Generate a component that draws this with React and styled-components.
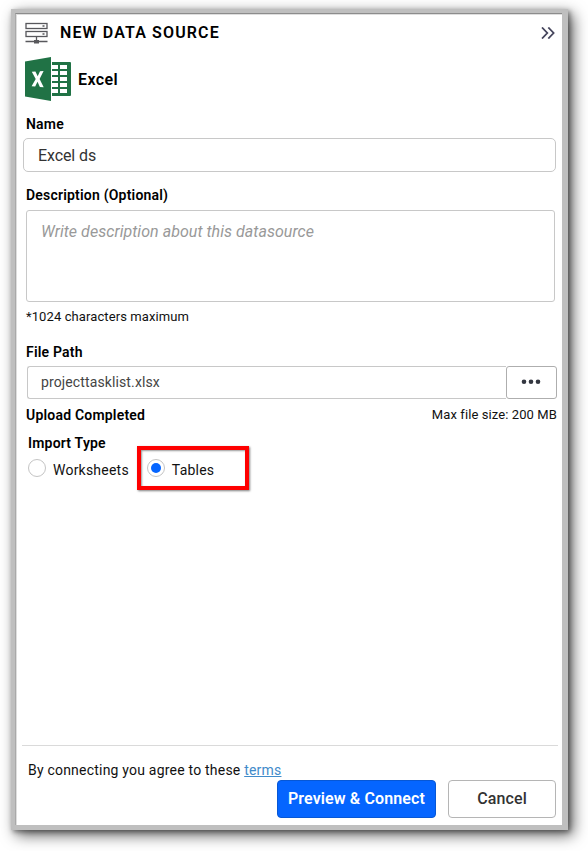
import React from "react";
import styled, { createGlobalStyle } from "styled-components";

const GlobalStyle = createGlobalStyle`
  * { box-sizing: border-box; }
  body { margin: 0; background: #fff; overflow: hidden; font-family: Roboto, "Liberation Sans", sans-serif; color: #000; }
  button, input, textarea { font-family: inherit; }
`;

const Page = styled.div`
  width: 588px;
  height: 851px;
  padding: 9px 0 0 11px;
  overflow: hidden;
`;

const Panel = styled.main`
  display: flex;
  flex-direction: column;
  width: 557px;
  height: 821px;
  border: solid #bfbfbf;
  border-width: 4px 6px 5px 4px;
  box-shadow: 5px 5px 14px rgba(0, 0, 0, 0.62), 2px 2px 5px rgba(0, 0, 0, 0.4);
  background: #fff;
`;

const Inner = styled.div`
  display: flex;
  flex-direction: column;
  flex: 1;
  border-top: 1px solid #8c8c8c;
  border-left: 1px solid #a9a9a9;
  box-shadow: inset 1px 1px 0 #dedede;
  padding: 0 4px 7px 7px;
`;

const Header = styled.header`
  display: flex;
  align-items: center;
  height: 38px;
  padding: 0 3px 0 2px;
`;

const Title = styled.h1`
  flex: 1;
  margin: 0 0 0 12px;
  font-size: 16px;
  font-weight: 600;
  line-height: 20px;
  letter-spacing: 1.12px;
`;

const Source = styled.section`
  display: flex;
  align-items: center;
  gap: 7px;
  height: 54px;
  padding-left: 2px;
`;

const SourceName = styled.h2`
  margin: 0;
  font-size: 16px;
  font-weight: 600;
  letter-spacing: 0.4px;
`;

const Label = styled.label`
  display: block;
  height: 20px;
  margin: ${(p) => p.$margin};
  font-size: 14px;
  font-weight: 600;
  line-height: 20px;
  letter-spacing: 0.2px;
`;

const NameInput = styled.input`
  width: 533px;
  height: 34px;
  margin-top: 4px;
  padding: 0 14px;
  border: 1px solid #c8c8c8;
  border-radius: 5px;
  color: #333;
  font-size: 16px;
  letter-spacing: -0.1px;
  outline: none;
`;

const Description = styled.textarea`
  display: block;
  width: 529px;
  height: 92px;
  margin: 5px 0 0 3px;
  padding: 11px 14px;
  border: 1px solid #c8c8c8;
  border-radius: 3px;
  font-size: 16px;
  letter-spacing: 0.04px;
  line-height: 20px;
  resize: none;
  outline: none;
  &::placeholder { color: #999; font-style: italic; opacity: 1; }
`;

const Hint = styled.p`
  margin: ${(p) => p.$margin || "0"};
  font-size: 13px;
  line-height: 20px;
  color: #111;
  letter-spacing: 0.1px;
`;

const FileRow = styled.div`
  display: flex;
  width: 530px;
  height: 33px;
  margin: 4px 0 0 4px;
`;

const FileInput = styled.input`
  flex: 1;
  min-width: 0;
  padding: 0 13px 2px;
  border: 1px solid #c8c8c8;
  border-right: 0;
  border-radius: 3px 0 0 3px;
  color: #444;
  font-size: 14px;
  letter-spacing: 0.12px;
  outline: none;
`;

const BrowseButton = styled.button`
  display: flex;
  align-items: center;
  justify-content: center;
  width: 51px;
  padding: 0 1px 1px 0;
  border: 1px solid #aeaeae;
  border-radius: 3px;
  background: #fff;
`;

const StatusRow = styled.div`
  display: flex;
  justify-content: space-between;
  align-items: center;
  height: 20px;
  margin: 6px 1px 0 3px;
`;

const RadioRow = styled.div`
  display: flex;
  align-items: flex-start;
  height: 46px;
  margin: -7px 0 0 5px;
`;

const Option = styled.label`
  display: flex;
  align-items: flex-start;
  height: 44px;
  gap: 7px;
  padding-top: 13px;
  ${(p) =>
    p.$marked &&
    `width: 112px; padding: 9px 0 0 6px; margin-left: 8px; border: 4px solid #fe0000; box-shadow: 1px 1px 2px rgba(0,0,0,.5), inset 1px 1px 2px rgba(0,0,0,.4);`}
`;

const Radio = styled.span`
  display: flex;
  flex: none;
  align-items: center;
  justify-content: center;
  width: 18px;
  height: 18px;
  border: 1px solid #c4c4c4;
  border-radius: 50%;
  &::after {
    content: "";
    width: 10px;
    height: 10px;
    border-radius: 50%;
    background: ${(p) => (p.$checked ? "#0565ff" : "transparent")};
  }
`;

const OptionText = styled.span`
  padding-top: 1px;
  font-size: 14px;
  line-height: 20px;
  color: #111;
  letter-spacing: 0.22px;
`;

const Footer = styled.footer`
  margin: auto 0 0 -1px;
  border-top: 1px solid #dadada;
  padding-top: 14px;
`;

const Terms = styled.p`
  margin: 0 0 0 6px;
  font-size: 14px;
  line-height: 20px;
  letter-spacing: 0.21px;
  color: #111;
`;

const Link = styled.a`
  color: #428bca;
  text-decoration: underline;
`;

const Actions = styled.div`
  display: flex;
  justify-content: flex-end;
  gap: 12px;
  padding-right: 2px;
`;

const Button = styled.button`
  width: ${(p) => (p.$primary ? "159px" : "108px")};
  height: 38px;
  padding: 0 0 1px;
  border: 1px solid ${(p) => (p.$primary ? "#0757d5" : "#b5b5b5")};
  border-radius: 4px;
  background: ${(p) => (p.$primary ? "#0565ff" : "#fff")};
  color: ${(p) => (p.$primary ? "#fff" : "#333")};
  font-size: 16px;
  font-weight: ${(p) => (p.$primary ? 600 : 500)};
  letter-spacing: 0.12px;
`;

const ServerIcon = () => (
  <svg width="23" height="22" viewBox="0 0 23 22" fill="none" stroke="#58585c">
    <rect x="1" y="1.5" width="21" height="5" strokeWidth="1.3" />
    <rect x="1" y="9.5" width="21" height="5" strokeWidth="1.3" />
    <path d="M17.5 4h2M17.5 12h2M11.5 14.5v5M.5 19.5h22" strokeWidth="1.3" />
    <rect x="9" y="18" width="5" height="3.5" fill="#58585c" stroke="none" />
  </svg>
);

const ChevronsIcon = () => (
  <svg width="14" height="12" viewBox="0 0 14 12" fill="none" stroke="#45455c" strokeWidth="1.8">
    <path d="m1 .5 5.3 5.5L1 11.5M7.3.5l5.3 5.5-5.3 5.5" />
  </svg>
);

const ExcelIcon = () => (
  <svg width="46" height="44" viewBox="0 0 46 44">
    <path d="M25 5h20q1 0 1 1v32q0 1-1 1H25z" fill="#207245" />
    <path
      d="M27 8h6v4h-6zM35 8h7v4h-7zM27 14h6v4h-6zM35 14h7v4h-7zM27 20h6v4h-6zM35 20h7v4h-7zM27 26h6v4h-6zM35 26h7v4h-7zM27 32h6v4h-6zM35 32h7v4h-7z"
      fill="#fff"
    />
    <path d="M0 4.5 26 0v44L0 39.5z" fill="#207245" />
    <path d="M26.5 5v34" stroke="#fff" strokeWidth="1" />
    <path d="M6.8 14.8 10.4 14.6 12.7 19.2 15 14.3 18.6 14 14.6 22 18.7 30.2 14.9 29.9 12.5 24.8 10.2 29.6 6.6 29.3 10.7 21.9Z" fill="#fff" />
  </svg>
);

const DotsIcon = () => (
  <svg width="20" height="6" viewBox="0 0 20 6" fill="#333740">
    <circle cx="3" cy="2.7" r="2.3" />
    <circle cx="10" cy="2.7" r="2.3" />
    <circle cx="17" cy="2.7" r="2.3" />
  </svg>
);

export default function App() {
  return (
    <Page>
      <GlobalStyle />
      <Panel>
        <Inner>
          <Header>
            <ServerIcon />
            <Title>NEW DATA SOURCE</Title>
            <ChevronsIcon />
          </Header>
          <Source>
            <ExcelIcon />
            <SourceName>Excel</SourceName>
          </Source>
          <Label htmlFor="name" $margin="8px 0 0 3px">Name</Label>
          <NameInput id="name" defaultValue="Excel ds" />
          <Label htmlFor="description" $margin="13px 0 0 3px">Description (Optional)</Label>
          <Description id="description" placeholder="Write description about this datasource" />
          <Hint $margin="5px 0 0 3px">*1024 characters maximum</Hint>
          <Label htmlFor="file" $margin="15px 0 0 3px">File Path</Label>
          <FileRow>
            <FileInput id="file" defaultValue="projecttasklist.xlsx" />
            <BrowseButton type="button" aria-label="Browse">
              <DotsIcon />
            </BrowseButton>
          </FileRow>
          <StatusRow>
            <Label as="span" $margin="0">Upload Completed</Label>
            <Hint>Max file size: 200 MB</Hint>
          </StatusRow>
          <Label as="span" $margin="8px 0 0 5px">Import Type</Label>
          <RadioRow>
            <Option>
              <Radio />
              <OptionText>Worksheets</OptionText>
            </Option>
            <Option $marked>
              <Radio $checked />
              <OptionText>Tables</OptionText>
            </Option>
          </RadioRow>
          <Footer>
            <Terms>
              By connecting you agree to these <Link href="#terms">terms</Link>
            </Terms>
            <Actions>
              <Button type="button" $primary>Preview &amp; Connect</Button>
              <Button type="button">Cancel</Button>
            </Actions>
          </Footer>
        </Inner>
      </Panel>
    </Page>
  );
}
